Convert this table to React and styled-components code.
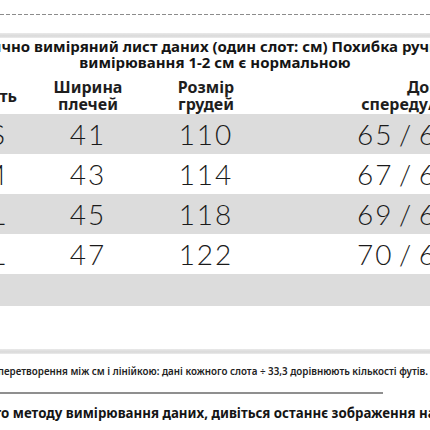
import React from 'react';
import styled, { createGlobalStyle } from 'styled-components';

const GlobalStyle = createGlobalStyle`
  html, body {
    margin: 0;
    padding: 0;
    background: #ffffff;
  }
`;

const Sheet = styled.div`
  width: 430px;
  height: 430px;
  overflow: hidden;
  display: flex;
  flex-direction: column;
  font-family: 'Noto Sans', 'Open Sans', sans-serif;
  color: #1c1c1c;
`;

const DashLine = styled.div`
  margin-top: 14px;
  height: 1px;
  background: repeating-linear-gradient(90deg, #8c8c8c 0 4px, transparent 4px 6px);
`;

const Shelf = styled.div`
  margin-top: ${(p) => p.top}px;
  height: 5px;
  background: linear-gradient(#e9e9e9, #d9d9d9 60%, #ececec);
`;

const Title = styled.div`
  display: flex;
  flex-direction: column;
  align-items: center;
  font-size: 15px;
  font-weight: 700;
  line-height: 16px;
  white-space: nowrap;
  color: #151515;
`;

const Table = styled.div`
  margin-top: 8px;
  margin-left: -28px;
  display: grid;
  grid-template-columns: 40px 152px 84px 354px;
`;

const HeadCell = styled.div`
  height: 36px;
  display: flex;
  flex-direction: column;
  justify-content: center;
  align-items: ${(p) => (p.right ? 'flex-end' : 'center')};
  margin-right: ${(p) => (p.right ? '-5px' : '0')};
  padding-left: ${(p) => (p.shift ? `${p.shift}px` : '0')};
  font-size: 16px;
  font-weight: 700;
  line-height: 17px;
  white-space: nowrap;
  color: #1e1e1e;
`;

const Row = styled.div`
  display: contents;
`;

const Cell = styled.div`
  height: ${(p) => p.h}px;
  background: ${(p) => (p.shade ? '#dcdcdc' : '#ffffff')};
  display: flex;
  align-items: center;
  justify-content: ${(p) => (p.right ? 'flex-end' : p.lead ? 'flex-start' : 'center')};
  padding-left: ${(p) => (p.lead ? `${p.lead}px` : '0')};
  margin-right: ${(p) => (p.right ? '-4px' : '0')};
  padding-right: ${(p) => (p.right ? '9px' : '0')};
  font-family: 'Lato', 'Open Sans', sans-serif;
  font-weight: 300;
  font-size: 28px;
  letter-spacing: 2px;
  white-space: nowrap;
  color: #1a1a1a;
`;

const Note = styled.div`
  margin-top: 12px;
  display: flex;
  justify-content: flex-end;
  padding-right: 2px;
  font-size: 9.8px;
  font-weight: 600;
  line-height: 12px;
  white-space: nowrap;
  color: #222;
`;

const Rule = styled.div`
  margin-top: 14px;
  width: 383px;
  height: 2px;
  background: #8f8f8f;
`;

const Footer = styled.div`
  margin-top: 10px;
  display: flex;
  justify-content: center;
  font-size: 13.3px;
  font-weight: 700;
  line-height: 18px;
  white-space: nowrap;
  color: #151515;
`;

const rows = [
  { size: 'S', shoulder: '41', chest: '110', length: '65\u2009/\u200966', shade: true },
  { size: 'M', shoulder: '43', chest: '114', length: '67\u2009/\u200968', shade: false },
  { size: 'L', shoulder: '45', chest: '118', length: '69\u2009/\u200969', shade: true },
  { size: 'XL', shoulder: '47', chest: '122', length: '70\u2009/\u200969', shade: false },
  { size: '', shoulder: '', chest: '', length: '', shade: true },
];

export default function App() {
  return (
    <>
      <GlobalStyle />
      <Sheet>
        <DashLine />
        <Shelf top={18} />
        <Title>
          <span>Фізично виміряний лист даних (один слот: см) Похибка ручного</span>
          <span>вимірювання 1-2 см є нормальною</span>
        </Title>
        <Table>
          <HeadCell right>Ємність</HeadCell>
          <HeadCell>
            <span>Ширина</span>
            <span>плечей</span>
          </HeadCell>
          <HeadCell>
            <span>Розмір</span>
            <span>грудей</span>
          </HeadCell>
          <HeadCell shift={40}>
            <span>Довжина</span>
            <span>спереду/позаду (см)</span>
          </HeadCell>
          {rows.map((r, i) => {
            const h = i === 4 ? 32 : 40;
            return (
              <Row key={i}>
                <Cell h={h} shade={r.shade} right>{r.size}</Cell>
                <Cell h={h} shade={r.shade}>{r.shoulder}</Cell>
                <Cell h={h} shade={r.shade}>{r.chest}</Cell>
                <Cell h={h} shade={r.shade} lead={109}>{r.length}</Cell>
              </Row>
            );
          })}
        </Table>
        <Shelf top={43} />
        <Note>
          Спосіб перетворення між см і лінійкою: дані кожного слота ÷ 33,3 дорівнюють кількості футів.
        </Note>
        <Rule />
        <Footer>
          Для детального методу вимірювання даних, дивіться останнє зображення на сторінці лота
        </Footer>
      </Sheet>
    </>
  );
}
